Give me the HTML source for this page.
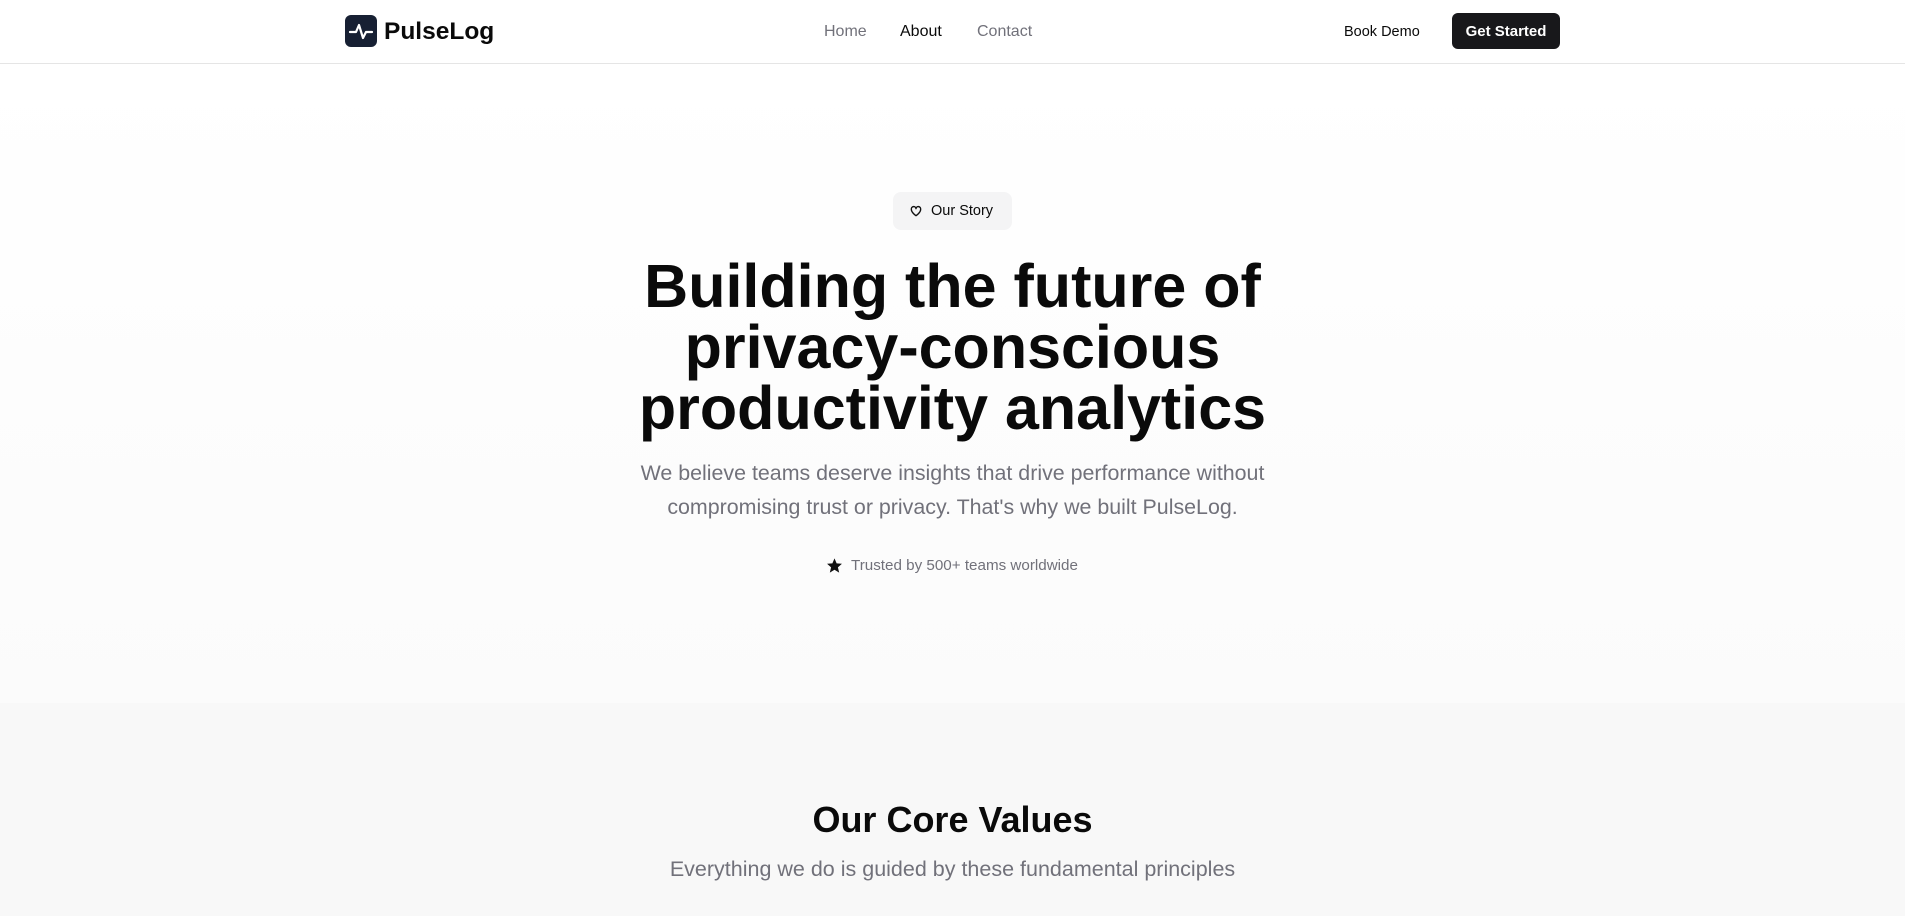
<!DOCTYPE html>
<html><head><meta charset="utf-8"><style>
*{margin:0;padding:0;box-sizing:border-box}
body{width:1905px;height:916px;overflow:hidden;font-family:"Liberation Sans",sans-serif;color:#0a0a0a;background:#fff;position:relative}
.nav{position:absolute;left:0;top:0;width:1905px;height:64px;border-bottom:1px solid #e5e5e5;background:#fff}
.a{position:absolute;white-space:nowrap}
.hero{position:absolute;left:0;top:64px;width:1905px;height:639px;background:linear-gradient(#fff,#fbfbfb)}
.sec{position:absolute;left:0;top:703px;width:1905px;height:213px;background:#f8f8f8}
.c{position:absolute;left:0;width:1905px;text-align:center}
</style></head><body>
<div class="nav">
  <svg class="a" style="left:345px;top:15px" width="32" height="32" viewBox="0 0 32 32"><rect width="32" height="32" rx="6" fill="#172033"/><path d="M5 17h6l3-7 4 13 3-6h6" fill="none" stroke="#fff" stroke-width="2.2" stroke-linejoin="round" stroke-linecap="round"/></svg>
  <div class="a" style="left:384px;top:18px;font-size:24.5px;font-weight:bold">PulseLog</div>
  <div class="a" style="left:824px;top:23px;font-size:16px;color:#71717a">Home</div>
  <div class="a" style="left:900px;top:23px;font-size:16px;color:#0a0a0a">About</div>
  <div class="a" style="left:977px;top:23px;font-size:16px;color:#71717a">Contact</div>
  <div class="a" style="left:1344px;top:24px;font-size:14.5px">Book Demo</div>
  <div class="a" style="left:1452px;top:13px;width:108px;height:36px;background:#18181b;border-radius:6px;color:#fff;font-size:15px;font-weight:bold;text-align:center;line-height:38px">Get Started</div>
</div>
<div class="hero"></div>
<div class="a" style="left:893px;top:192px;width:119px;height:38px;background:#f4f4f5;border-radius:8px;font-size:14.5px;line-height:39px;padding-left:38px">Our Story</div>
<svg class="a" style="left:909px;top:204px" width="14" height="14" viewBox="0 0 24 24"><path d="M12 20s-8-5-8-11a4 4 0 0 1 8-1 4 4 0 0 1 8 1c0 6-8 11-8 11z" fill="none" stroke="#111" stroke-width="2.4" stroke-linejoin="round"/></svg>
<div class="c" style="top:256px;font-size:61px;font-weight:bold;line-height:61px">Building the future of<br>privacy-conscious<br>productivity analytics</div>
<div class="c" style="top:456px;font-size:21.4px;line-height:34px;color:#71717a">We believe teams deserve insights that drive performance without<br>compromising trust or privacy. That's why we built PulseLog.</div>
<svg class="a" style="left:826px;top:557px" width="17" height="17" viewBox="0 0 24 24"><path d="M12 2l3 7 7.5.6-5.7 5 1.8 7.4L12 18l-6.6 4 1.8-7.4-5.7-5L9 9z" fill="#111"/></svg>
<div class="a" style="left:851px;top:557px;font-size:15.2px;color:#71717a">Trusted by 500+ teams worldwide</div>
<div class="sec"></div>
<div class="c" style="top:799px;font-size:36px;font-weight:bold">Our Core Values</div>
<div class="c" style="top:857px;font-size:21.5px;color:#71717a">Everything we do is guided by these fundamental principles</div>
</body></html>
